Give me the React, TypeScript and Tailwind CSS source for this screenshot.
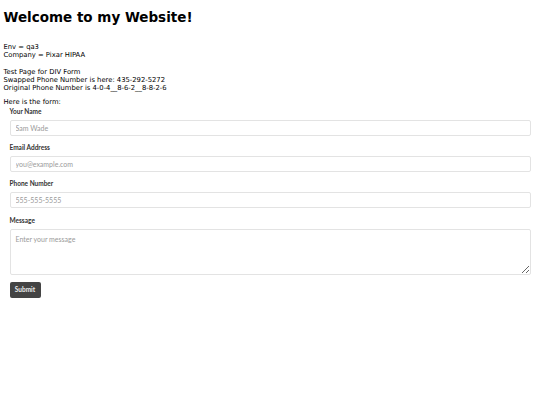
export default function App() {
  const labelCls = "block text-[6.5px] font-bold text-[#333] leading-[8px] mb-[4px]";
  const inputCls =
    "block w-full h-[16px] border border-[#e3e3e3] rounded-[2px] bg-white px-[5px] text-[7px] text-[#333] placeholder:text-[#9a9a9a] outline-none";
  return (
    <div className="min-h-[405px] bg-white px-[3.5px] font-['DejaVu_Sans',sans-serif] text-[6.8px] text-black">
      <h1 className="pt-[9px] text-[13.5px] font-bold leading-[16px]">Welcome to my Website!</h1>
      <div className="mt-[18px] leading-[8px]">
        <div>Env = qa3</div>
        <div>Company = Pixar HIPAA</div>
        <div className="mt-[9px]">Test Page for DIV Form</div>
        <div>Swapped Phone Number is here: 435-292-5272</div>
        <div>Original Phone Number is 4-0-4__8-6-2__8-8-2-6</div>
        <div className="mt-[6px]">Here is the form:</div>
      </div>
      <form className="mt-[2px] px-[6px] font-['Lato',sans-serif]" onSubmit={(e) => e.preventDefault()}>
        <label className={labelCls}>Your Name</label>
        <input className={inputCls} placeholder="Sam Wade" />
        <label className={labelCls + " mt-[8px]"}>Email Address</label>
        <input className={inputCls} placeholder="you@example.com" />
        <label className={labelCls + " mt-[8px]"}>Phone Number</label>
        <input className={inputCls} placeholder="555-555-5555" />
        <label className={labelCls + " mt-[9px]"}>Message</label>
        <textarea
          className="block w-full h-[46px] border border-[#e3e3e3] rounded-[2px] bg-white px-[5px] py-[4px] text-[7px] text-[#333] placeholder:text-[#9a9a9a] outline-none"
          placeholder="Enter your message"
        />
        <button
          type="submit"
          className="mt-[7px] h-[16px] w-[31px] rounded-[2px] bg-[#444] text-[#eee] text-[6.5px] font-bold"
        >
          Submit
        </button>
      </form>
    </div>
  );
}
